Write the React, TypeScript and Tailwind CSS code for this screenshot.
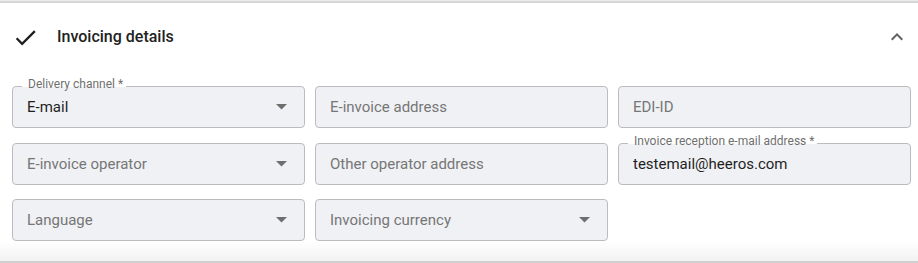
import React from "react";

const FIELD_BG = "#f0f1f5";

function Arrow() {
  return (
    <svg width="11" height="6" viewBox="0 0 11 6" className="shrink-0">
      <polygon points="0,0 11,0 5.5,5.5" fill="#6e6e6e" />
    </svg>
  );
}

type FieldProps = {
  label?: string;
  value?: string;
  placeholder?: string;
  select?: boolean;
};

function Field({ label, value, placeholder, select }: FieldProps) {
  return (
    <div className="relative h-[42px] rounded-[4px] border border-[#bcbcbf] bg-[#f0f1f5] flex items-center pl-[14px] pr-[17px]">
      {label && (
        <span
          className="absolute left-[9px] top-[-10px] h-[14px] pl-[6px] pr-[3px] text-[12px] leading-[14px] text-[#6f6f6f] whitespace-nowrap bg-[linear-gradient(to_bottom,#ffffff_0px,#ffffff_10px,#f0f1f5_10px,#f0f1f5_100%)]"
        >
          {label}
        </span>
      )}
      <span
        className={
          "flex-1 text-[15px] leading-[18px] truncate " +
          (value ? "text-[#1f1f1f]" : "text-[#767676]")
        }
      >
        {value ?? placeholder}
      </span>
      {select && <Arrow />}
    </div>
  );
}

export default function App() {
  return (
    <div
      className="w-[918px] h-[263px] bg-white flex flex-col overflow-hidden"
      style={{ fontFamily: "Roboto, 'Noto Sans', Arial, sans-serif" }}
    >
      <div className="h-[1px] bg-[#ececec]" />
      <div className="h-[2px] bg-[#d6d6d6]" />
      <div className="h-[68px] flex items-center pl-[12px] pr-[9px]">
        <svg width="27" height="27" viewBox="0 0 24 24" className="shrink-0">
          <path
            d="M9 16.17 4.83 12l-1.42 1.41L9 19 21 7l-1.41-1.41z"
            fill="#1e1e1e"
          />
        </svg>
        <span className="ml-[18px] text-[16px] font-medium text-[#222222] flex-1">
          Invoicing details
        </span>
        <svg width="24" height="24" viewBox="0 0 24 24" className="shrink-0">
          <path
            d="M12 8l-6 6 1.41 1.41L12 10.83l4.59 4.58L18 14z"
            fill="#606060"
          />
        </svg>
      </div>
      <div className="mt-[15px] pl-[12px] w-[911px] grid grid-cols-3 gap-x-[10px] gap-y-[14.5px]">
        <Field label="Delivery channel *" value="E-mail" select />
        <Field placeholder="E-invoice address" />
        <Field placeholder="EDI-ID" />
        <Field placeholder="E-invoice operator" select />
        <Field placeholder="Other operator address" />
        <Field label="Invoice reception e-mail address *" value="testemail@heeros.com" />
        <Field placeholder="Language" select />
        <Field placeholder="Invoicing currency" select />
      </div>
      <div className="flex-1 bg-gradient-to-b from-white to-[#f2f2f2]" />
      <div className="h-[2px] bg-[#cfcfcf]" />
    </div>
  );
}
